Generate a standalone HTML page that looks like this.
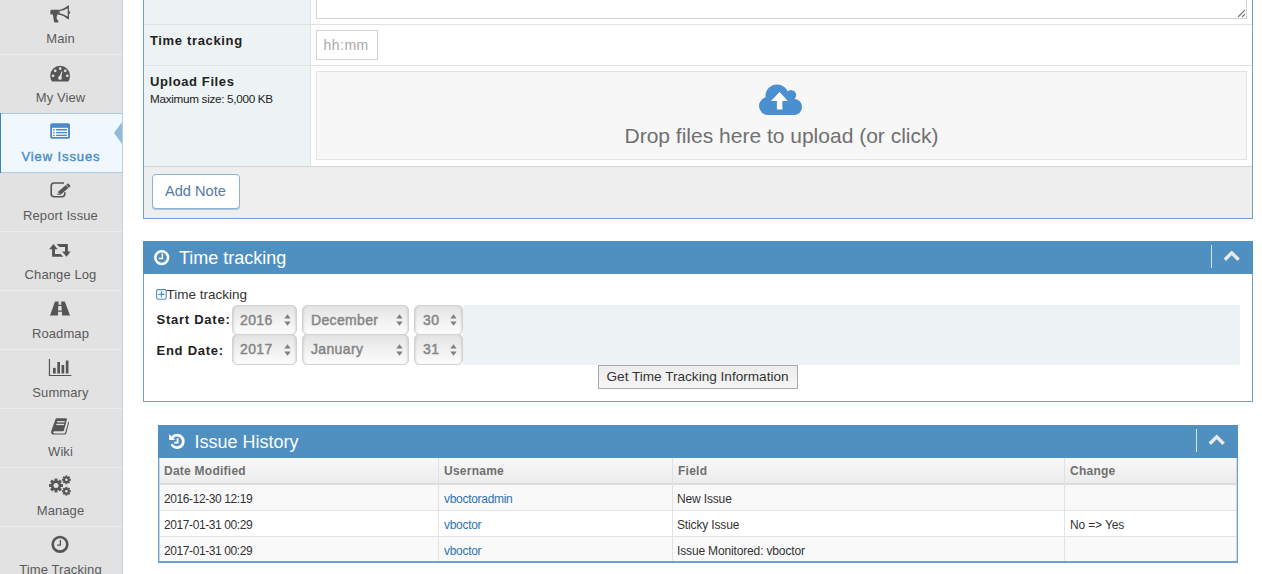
<!DOCTYPE html>
<html><head><meta charset="utf-8">
<style>
*{box-sizing:border-box;margin:0;padding:0}
html,body{width:1262px;height:574px;overflow:hidden;background:#fff;font-family:"Liberation Sans",sans-serif;color:#333}
.abs{position:absolute}
.t{position:absolute;white-space:nowrap;line-height:1}
/* sidebar */
#sb{position:absolute;left:0;top:0;width:122px;height:574px;background:#e2e2e2}
#sbr{position:absolute;left:122px;top:0;width:1px;height:574px;background:#b7d0e4}
.sep{position:absolute;left:0;width:122px;height:1px;background:#ededed}
.lbl{position:absolute;left:0;width:121px;text-align:center;font-size:13px;color:#5a5a5a;letter-spacing:0.1px;white-space:nowrap;line-height:1}
.ic{position:absolute}
/* widgets */
.wb{position:absolute;border:1px solid #6fa1cc}
.wh{position:absolute;background:#5090c1}
.sel{border:1px solid #d2d2d2;border-radius:5px;background:linear-gradient(#e3e3e3,#efefef 45%,#fcfcfc);box-shadow:inset 2px 0 2px -1px rgba(0,0,0,0.10),inset -2px 0 2px -1px rgba(0,0,0,0.10)}
.wt{position:absolute;color:#fff;font-size:18px;white-space:nowrap;line-height:1}
</style></head><body>

<!-- SIDEBAR -->
<div id="sb"></div>
<div id="sbr"></div>
<div class="sep" style="top:54px"></div>
<div class="sep" style="top:231px"></div>
<div class="sep" style="top:290px"></div>
<div class="sep" style="top:349px"></div>
<div class="sep" style="top:408px"></div>
<div class="sep" style="top:467px"></div>
<div class="sep" style="top:526px"></div>

<!-- active item -->
<div class="abs" style="left:0;top:113px;width:122px;height:60px;background:#f1f8fd;border-top:1px solid #aecbe2;border-bottom:1px solid #aecbe2"></div>
<div class="abs" style="left:0;top:113px;width:1px;height:60px;background:#3987c9"></div>
<div class="abs" style="left:114px;top:122px;width:0;height:0;border-top:11px solid transparent;border-bottom:11px solid transparent;border-right:8px solid #91bbdb"></div>

<!-- Main -->
<svg class="ic" style="left:50px;top:5px" width="21" height="19" viewBox="0 0 21 19">
 <path d="M1.6 4.8 L8.8 4.8 L8.8 9.6 L7.4 9.6 Q6.6 11.4 6.6 13.1 Q6.8 15.3 8.6 16.1 L8.1 17.5 L4.9 17.5 Q4 17.3 3.9 16.2 L2.9 9.6 L1.6 9.6 Q0.4 9.6 0.4 8.4 L0.4 6 Q0.4 4.8 1.6 4.8Z" fill="#555"/>
 <path fill-rule="evenodd" d="M8.5 4.9 Q13.5 4.5 18 0.5 L19 0.5 L19 14.3 L18 14.3 Q13.5 10.3 8.5 9.5Z M9.7 6.1 L9.7 8.3 Q13.5 8.9 17.7 11.6 L17.7 3.2 Q13.5 5.6 9.7 6.1Z" fill="#555"/>
 <rect x="18.9" y="6.4" width="1.2" height="2.3" fill="#555"/>
</svg>
<div class="lbl" style="top:32px">Main</div>

<!-- My View -->
<svg class="ic" style="left:50px;top:65px" width="21" height="17" viewBox="0 0 21 17">
 <path d="M10.1 0.8 A9.9 9.9 0 0 1 20 10.7 Q20 13.8 18.4 16.4 L2.0 16.4 Q0.2 13.8 0.2 10.7 A9.9 9.9 0 0 1 10.1 0.8Z" fill="#555"/>
 <g fill="#e2e2e2">
 <circle cx="10.2" cy="3.7" r="1.35"/>
 <circle cx="5.2" cy="5.8" r="1.35"/>
 <circle cx="15.2" cy="5.8" r="1.35"/>
 <circle cx="3.1" cy="10.8" r="1.35"/>
 <circle cx="17.3" cy="10.8" r="1.35"/>
 <circle cx="10" cy="12.9" r="1.9"/>
 <path d="M9 12.6 L11.7 6.2 L12.5 6.5 L11 13.2Z"/>
 </g>
</svg>
<div class="lbl" style="top:91px">My View</div>

<!-- View Issues -->
<svg class="ic" style="left:50px;top:123px" width="21" height="17" viewBox="0 0 21 17">
 <rect x="0.2" y="0.2" width="19.8" height="15.6" rx="1.8" fill="#4a8ac6"/>
 <rect x="2" y="4.8" width="16.1" height="9.2" fill="#f1f8fd"/>
 <g fill="#4a8ac6">
 <rect x="3" y="6" width="1.7" height="1.4" rx="0.5"/><rect x="6" y="6" width="11.1" height="1.4" rx="0.6"/>
 <rect x="3" y="8.95" width="1.7" height="1.3" rx="0.5"/><rect x="6" y="8.95" width="11.1" height="1.3" rx="0.6"/>
 <rect x="3" y="11.7" width="1.7" height="1.4" rx="0.5"/><rect x="6" y="11.7" width="11.1" height="1.4" rx="0.6"/>
 </g>
</svg>
<div class="lbl" style="top:150px;color:#4a8dc6;font-weight:normal;letter-spacing:0.9px;-webkit-text-stroke:0.4px #4a8dc6;text-indent:0.9px">View Issues</div>

<!-- Report Issue -->
<svg class="ic" style="left:50px;top:181px" width="23" height="18" viewBox="0 0 23 18">
 <path d="M14 2 L4.2 2 Q1.2 2 1.2 5 L1.2 12.8 Q1.2 15.8 4.2 15.8 L11.8 15.8 Q14.8 15.8 14.8 12.8 L14.8 11.2" fill="none" stroke="#555" stroke-width="1.6"/>
 <path d="M9.36 12.16 L17.18 5.57" stroke="#555" stroke-width="3.9"/>
 <path d="M17.64 5.18 L19.40 3.70" stroke="#555" stroke-width="3.9"/>
 <path d="M7.30 13.90 L10.62 13.65 L8.11 10.67Z" fill="#555"/>
 <path d="M8.14 13.19 L9.78 13.12 L8.49 11.59Z" fill="#d8d8d8"/>
</svg>
<div class="lbl" style="top:209px">Report Issue</div>

<!-- Change Log -->
<svg class="ic" style="left:49px;top:243px" width="22" height="15" viewBox="0 0 22 15">
 <path d="M4.5 1.1 L8.7 6.3 L6 6.3 L6 11.1 L11.6 11.1 L14.3 13.8 L3.1 13.8 L3.1 6.3 L0.1 6.3Z" fill="#555"/>
 <path d="M7.7 1.1 L18.9 1.1 L18.9 8.6 L21.7 8.6 L17.5 13.8 L13.1 8.6 L16 8.6 L16 4 L10.4 4Z" fill="#555"/>
</svg>
<div class="lbl" style="top:268px">Change Log</div>

<!-- Roadmap -->
<svg class="ic" style="left:49px;top:301px" width="22" height="16" viewBox="0 0 22 16">
 <path fill-rule="evenodd" d="M6 0.6 L9.7 0.6 L9.5 3.7 L12.3 3.7 L12.1 0.6 L15.8 0.6 L21 14.6 L13.1 14.6 L12.9 10.8 L9.1 10.8 L8.9 14.6 L1 14.6Z M9.3 5.1 L9.1 9.4 L12.7 9.4 L12.5 5.1Z" fill="#555"/>
</svg>
<div class="lbl" style="top:327px">Roadmap</div>

<!-- Summary -->
<svg class="ic" style="left:48px;top:358px" width="24" height="19" viewBox="0 0 24 19">
 <path d="M1.45 1 L1.45 17.5 L23.4 17.5" fill="none" stroke="#555" stroke-width="1.2"/>
 <rect x="5" y="9.9" width="2.7" height="5.6" fill="#555"/>
 <rect x="9.3" y="4" width="2.7" height="11.5" fill="#555"/>
 <rect x="13.5" y="7" width="2.7" height="8.5" fill="#555"/>
 <rect x="17.8" y="2.5" width="2.7" height="13" fill="#555"/>
</svg>
<div class="lbl" style="top:386px">Summary</div>

<!-- Wiki -->
<svg class="ic" style="left:50px;top:417px" width="20" height="19" viewBox="0 0 20 19">
 <path d="M6.8 1.2 L16.2 1.2 Q17.2 1.4 16.9 2.6 L13.9 13.6 Q13.6 14.3 12.8 14.3 L4.6 14.3 Q2.9 14.5 3.1 15.6 Q3.3 16.4 4.6 16.4 L14.2 16.4 Q15.1 16.3 15.3 15.5 L18.3 4.7 L19.1 5.2 L16.4 16.1 Q16 17.6 14.4 17.6 L3.8 17.6 Q0.9 17.6 1.1 14.8 Q1.2 14.3 1.4 13.6 L5.5 2.3 Q5.8 1.2 6.8 1.2Z" fill="#555"/>
 <rect x="7.1" y="4.1" width="7.7" height="1.3" fill="#e2e2e2"/>
 <rect x="6.3" y="6.8" width="7.7" height="1.3" fill="#e2e2e2"/>
</svg>
<div class="lbl" style="top:445px">Wiki</div>

<!-- Manage -->
<svg class="ic" style="left:48px;top:475px" width="24" height="21" viewBox="0 0 24 21"><g fill="#555"><circle cx="8" cy="10.5" r="5"/><rect x="6.5" y="3.5999999999999996" width="3" height="13.8" transform="rotate(0.0 8 10.5)"/><rect x="6.5" y="3.5999999999999996" width="3" height="13.8" transform="rotate(45.0 8 10.5)"/><rect x="6.5" y="3.5999999999999996" width="3" height="13.8" transform="rotate(90.0 8 10.5)"/><rect x="6.5" y="3.5999999999999996" width="3" height="13.8" transform="rotate(135.0 8 10.5)"/><circle cx="18.4" cy="4.8" r="3.1"/><rect x="17.4" y="0.39999999999999947" width="2" height="8.8" transform="rotate(0.0 18.4 4.8)"/><rect x="17.4" y="0.39999999999999947" width="2" height="8.8" transform="rotate(45.0 18.4 4.8)"/><rect x="17.4" y="0.39999999999999947" width="2" height="8.8" transform="rotate(90.0 18.4 4.8)"/><rect x="17.4" y="0.39999999999999947" width="2" height="8.8" transform="rotate(135.0 18.4 4.8)"/><circle cx="18.4" cy="16.2" r="3.1"/><rect x="17.4" y="11.799999999999999" width="2" height="8.8" transform="rotate(0.0 18.4 16.2)"/><rect x="17.4" y="11.799999999999999" width="2" height="8.8" transform="rotate(45.0 18.4 16.2)"/><rect x="17.4" y="11.799999999999999" width="2" height="8.8" transform="rotate(90.0 18.4 16.2)"/><rect x="17.4" y="11.799999999999999" width="2" height="8.8" transform="rotate(135.0 18.4 16.2)"/></g><circle cx="8" cy="10.5" r="2.5" fill="#e2e2e2"/><circle cx="18.4" cy="4.8" r="1.3" fill="#e2e2e2"/><circle cx="18.4" cy="16.2" r="1.3" fill="#e2e2e2"/></svg>
<div class="lbl" style="top:504px">Manage</div>

<!-- Time Tracking -->
<svg class="ic" style="left:50px;top:535px" width="20" height="19" viewBox="0 0 20 19">
 <circle cx="10" cy="9.3" r="7.3" fill="none" stroke="#555" stroke-width="2.6"/>
 <path d="M10.4 5.1 L10.4 10.15 L7.1 10.15" fill="none" stroke="#555" stroke-width="1.3"/>
</svg>
<div class="lbl" style="top:563px">Time Tracking</div>

<!-- ============ MAIN ============ -->
<!-- widget 1: form -->
<div class="abs" style="left:143px;top:-10px;width:1110px;height:229px;border:1px solid #6fa1cc;border-top:none;background:#fff"></div>
<div class="abs" style="left:144px;top:-10px;width:166px;height:176px;background:#edf3f4"></div>
<div class="abs" style="left:310px;top:-10px;width:1px;height:176px;background:#e2e2e2"></div>
<div class="abs" style="left:144px;top:24px;width:1108px;height:1px;background:#e2e2e2"></div>
<div class="abs" style="left:144px;top:65px;width:1108px;height:1px;background:#e2e2e2"></div>
<!-- textarea -->
<div class="abs" style="left:316px;top:-10px;width:931px;height:29px;border:1px solid #d5d5d5;border-top:none;background:#fff"></div>
<svg class="abs" style="left:1236px;top:8px" width="10" height="10" viewBox="0 0 10 10"><path d="M2 9 L9 2 M6 9 L9 6" stroke="#777" stroke-width="1.1"/></svg>

<div class="t" style="left:150px;top:33.7px;font-size:13px;font-weight:bold;color:#222;letter-spacing:0.65px">Time tracking</div>
<div class="abs" style="left:316px;top:30px;width:62px;height:30px;border:1px solid #d5d5d5;background:#fff"></div>
<div class="t" style="left:323.5px;top:38.2px;font-size:14px;color:#aaa;letter-spacing:0.5px">hh:mm</div>

<div class="t" style="left:150px;top:74.7px;font-size:13px;font-weight:bold;color:#222;letter-spacing:0.6px">Upload Files</div>
<div class="t" style="left:150px;top:93.1px;font-size:11.7px;color:#222;letter-spacing:-0.29px">Maximum size: 5,000 KB</div>

<!-- dropzone -->
<div class="abs" style="left:316px;top:71px;width:931px;height:89px;border:1px solid #e3e3e3;background:#f7f7f7"></div>
<svg class="abs" style="left:759px;top:83px" width="44" height="33" viewBox="0 0 44 33">
 <g fill="#4a8fcf"><circle cx="9" cy="23" r="9"/><circle cx="18" cy="12.9" r="11.5"/><circle cx="32" cy="12.1" r="5.2"/><circle cx="35" cy="24" r="8"/><rect x="9" y="15" width="26" height="17"/></g>
 <path d="M20.6 8.9 L28.8 17.9 L23.4 17.9 L23.4 26.5 L17.9 26.5 L17.9 17.9 L12 17.9Z" fill="#fff"/>
</svg>
<div class="t" style="left:624.5px;top:124.9px;font-size:21px;color:#707070">Drop files here to upload (or click)</div>

<!-- footer -->
<div class="abs" style="left:144px;top:166px;width:1108px;height:52px;background:#eeeeee;border-top:1px solid #d3d3d3"></div>
<div class="abs" style="left:152px;top:174px;width:88px;height:35px;background:#fff;border:1px solid #8db3d4;border-radius:4px;box-shadow:0 1px 0 #a9c4dc"></div>
<div class="t" style="left:165px;top:184.2px;font-size:14.6px;color:#4f7ba6">Add Note</div>

<!-- widget 2: time tracking -->
<div class="abs" style="left:143px;top:241px;width:1110px;height:161px;border:1px solid #6fa1cc;background:#fff"></div>
<div class="wh" style="left:143px;top:241px;width:1110px;height:33px"></div>
<svg class="abs" style="left:153px;top:249px" width="17" height="17" viewBox="0 0 17 17">
 <circle cx="8.7" cy="8.6" r="6.4" fill="none" stroke="#fff" stroke-width="2.6"/>
 <path d="M9.4 4.6 L9.4 9.4 L5.9 9.4" fill="none" stroke="#fff" stroke-width="1.5"/>
</svg>
<div class="wt" style="left:179px;top:248.8px">Time tracking</div>
<div class="abs" style="left:1211px;top:245px;width:1px;height:23px;background:#d6e5f1"></div>
<svg class="abs" style="left:1222px;top:248px" width="20" height="16" viewBox="0 0 20 16"><path d="M2.8 11.8 L9.7 4.9 L16.6 11.8" fill="none" stroke="#ebe9e9" stroke-width="3.4"/></svg>

<svg class="abs" style="left:155.6px;top:289.2px" width="11" height="11" viewBox="0 0 11 11">
 <rect x="0.6" y="0.6" width="9.6" height="9.6" rx="1.8" fill="none" stroke="#4a8ac6" stroke-width="1.1"/>
 <path d="M5.4 2.3 L5.4 8.5 M2.3 5.4 L8.5 5.4" stroke="#4a8ac6" stroke-width="1.1"/>
</svg>
<div class="t" style="left:166.5px;top:288.2px;font-size:13.5px;color:#333">Time tracking</div>

<div class="abs" style="left:463px;top:305px;width:777px;height:60px;background:#edf3f4"></div>
<div class="t" style="left:156.5px;top:313.4px;font-size:13px;font-weight:bold;color:#222;letter-spacing:0.75px">Start Date:</div>
<div class="t" style="left:156.5px;top:343.8px;font-size:13px;font-weight:bold;color:#222;letter-spacing:0.75px">End Date:</div>

<div class="abs sel" style="left:232px;top:305px;width:65px;height:30px"></div><div class="t" style="left:240px;top:312.5px;font-size:14px;font-weight:normal;color:#858585;letter-spacing:0.35px;-webkit-text-stroke:0.45px #858585">2016</div><svg class="abs" style="left:284px;top:314px" width="7" height="12" viewBox="0 0 7 12"><path d="M0.3 4.6 L3.5 0.3 L6.7 4.6Z M0.3 7.4 L3.5 11.7 L6.7 7.4Z" fill="#808080"/></svg>
<div class="abs sel" style="left:302px;top:305px;width:107px;height:30px"></div><div class="t" style="left:311px;top:312.5px;font-size:14px;font-weight:normal;color:#858585;letter-spacing:0.35px;-webkit-text-stroke:0.45px #858585">December</div><svg class="abs" style="left:396px;top:314px" width="7" height="12" viewBox="0 0 7 12"><path d="M0.3 4.6 L3.5 0.3 L6.7 4.6Z M0.3 7.4 L3.5 11.7 L6.7 7.4Z" fill="#808080"/></svg>
<div class="abs sel" style="left:414px;top:305px;width:49px;height:30px"></div><div class="t" style="left:423px;top:312.5px;font-size:14px;font-weight:normal;color:#858585;letter-spacing:0.35px;-webkit-text-stroke:0.45px #858585">30</div><svg class="abs" style="left:450px;top:314px" width="7" height="12" viewBox="0 0 7 12"><path d="M0.3 4.6 L3.5 0.3 L6.7 4.6Z M0.3 7.4 L3.5 11.7 L6.7 7.4Z" fill="#808080"/></svg>
<div class="abs sel" style="left:232px;top:334px;width:65px;height:31px"></div><div class="t" style="left:240px;top:342.2px;font-size:14px;font-weight:normal;color:#858585;letter-spacing:0.35px;-webkit-text-stroke:0.45px #858585">2017</div><svg class="abs" style="left:284px;top:344px" width="7" height="12" viewBox="0 0 7 12"><path d="M0.3 4.6 L3.5 0.3 L6.7 4.6Z M0.3 7.4 L3.5 11.7 L6.7 7.4Z" fill="#808080"/></svg>
<div class="abs sel" style="left:302px;top:334px;width:107px;height:31px"></div><div class="t" style="left:311px;top:342.2px;font-size:14px;font-weight:normal;color:#858585;letter-spacing:0.35px;-webkit-text-stroke:0.45px #858585">January</div><svg class="abs" style="left:396px;top:344px" width="7" height="12" viewBox="0 0 7 12"><path d="M0.3 4.6 L3.5 0.3 L6.7 4.6Z M0.3 7.4 L3.5 11.7 L6.7 7.4Z" fill="#808080"/></svg>
<div class="abs sel" style="left:414px;top:334px;width:49px;height:31px"></div><div class="t" style="left:423px;top:342.2px;font-size:14px;font-weight:normal;color:#858585;letter-spacing:0.35px;-webkit-text-stroke:0.45px #858585">31</div><svg class="abs" style="left:450px;top:344px" width="7" height="12" viewBox="0 0 7 12"><path d="M0.3 4.6 L3.5 0.3 L6.7 4.6Z M0.3 7.4 L3.5 11.7 L6.7 7.4Z" fill="#808080"/></svg>

<div class="abs" style="left:598px;top:365px;width:200px;height:24px;border:1px solid #a9a9a9;background:linear-gradient(#ececec,#f6f6f6)"></div>
<div class="t" style="left:606.5px;top:369.5px;font-size:13.6px;color:#333">Get Time Tracking Information</div>

<!-- widget 3: issue history -->
<div class="abs" style="left:158px;top:425px;width:1080px;height:138px;border:1px solid #6fa1cc;border-bottom-width:2px;background:#fff"></div>
<div class="wh" style="left:158px;top:425px;width:1080px;height:33px"></div>
<svg class="abs" style="left:168px;top:433px" width="18" height="17" viewBox="0 0 18 17">
 <path d="M4.24 12.25 A6.2 6.2 0 1 0 4.87 3.87" fill="none" stroke="#fff" stroke-width="2.8" stroke-linecap="round"/>
 <path d="M1.1 1.1 L1.1 7 L7.2 7Z" fill="#fff"/>
 <path d="M9.6 5.3 L9.6 9.6 L6.2 9.6" fill="none" stroke="#fff" stroke-width="1.8"/>
</svg>
<div class="wt" style="left:194.5px;top:433.4px">Issue History</div>
<div class="abs" style="left:1196px;top:429px;width:1px;height:23px;background:#d6e5f1"></div>
<svg class="abs" style="left:1207px;top:432px" width="20" height="16" viewBox="0 0 20 16"><path d="M2.8 11.8 L9.7 4.9 L16.6 11.8" fill="none" stroke="#ebe9e9" stroke-width="3.4"/></svg>

<!-- table -->
<div class="abs" style="left:159px;top:458px;width:1078px;height:27px;background:linear-gradient(#f8f8f8,#ececec);border-bottom:2px solid #dcdcdc"></div>
<div class="abs" style="left:159px;top:485px;width:1078px;height:25px;background:#f9f9f9"></div>
<div class="abs" style="left:159px;top:510px;width:1078px;height:1px;background:#e2e2e2"></div>
<div class="abs" style="left:159px;top:536px;width:1078px;height:1px;background:#e2e2e2"></div>
<div class="abs" style="left:159px;top:537px;width:1078px;height:24px;background:#f9f9f9"></div>
<div class="abs" style="left:438px;top:458px;width:1px;height:103px;background:#e2e2e2"></div>
<div class="abs" style="left:159px;top:458px;width:1px;height:103px;background:#c4d8ea"></div>
<div class="abs" style="left:1236px;top:458px;width:1px;height:103px;background:#c4d8ea"></div>
<div class="abs" style="left:672px;top:458px;width:1px;height:103px;background:#e2e2e2"></div>
<div class="abs" style="left:1064px;top:458px;width:1px;height:103px;background:#e2e2e2"></div>

<div class="t" style="left:164px;top:464.8px;font-size:12px;font-weight:bold;color:#707070;letter-spacing:0.25px">Date Modified</div>
<div class="t" style="left:444px;top:464.8px;font-size:12px;font-weight:bold;color:#707070;letter-spacing:0.25px">Username</div>
<div class="t" style="left:678px;top:464.8px;font-size:12px;font-weight:bold;color:#707070;letter-spacing:0.25px">Field</div>
<div class="t" style="left:1070px;top:464.8px;font-size:12px;font-weight:bold;color:#707070;letter-spacing:0.25px">Change</div>

<div class="t" style="left:164px;top:492.6px;font-size:12px;color:#333;letter-spacing:-0.4px">2016-12-30 12:19</div>
<div class="t" style="left:444px;top:492.6px;font-size:12px;color:#2f73b3;letter-spacing:-0.3px">vboctoradmin</div>
<div class="t" style="left:677px;top:492.6px;font-size:12px;color:#333;letter-spacing:-0.15px">New Issue</div>

<div class="t" style="left:164px;top:519.2px;font-size:12px;color:#333;letter-spacing:-0.4px">2017-01-31 00:29</div>
<div class="t" style="left:444px;top:519.2px;font-size:12px;color:#2f73b3;letter-spacing:-0.3px">vboctor</div>
<div class="t" style="left:677px;top:519.2px;font-size:12px;color:#333;letter-spacing:-0.15px">Sticky Issue</div>
<div class="t" style="left:1070px;top:519.2px;font-size:12px;color:#333;letter-spacing:-0.15px">No =&gt; Yes</div>

<div class="t" style="left:164px;top:544.8px;font-size:12px;color:#333;letter-spacing:-0.4px">2017-01-31 00:29</div>
<div class="t" style="left:444px;top:544.8px;font-size:12px;color:#2f73b3;letter-spacing:-0.3px">vboctor</div>
<div class="t" style="left:677px;top:544.8px;font-size:12px;color:#333;letter-spacing:-0.15px">Issue Monitored: vboctor</div>

</body></html>
